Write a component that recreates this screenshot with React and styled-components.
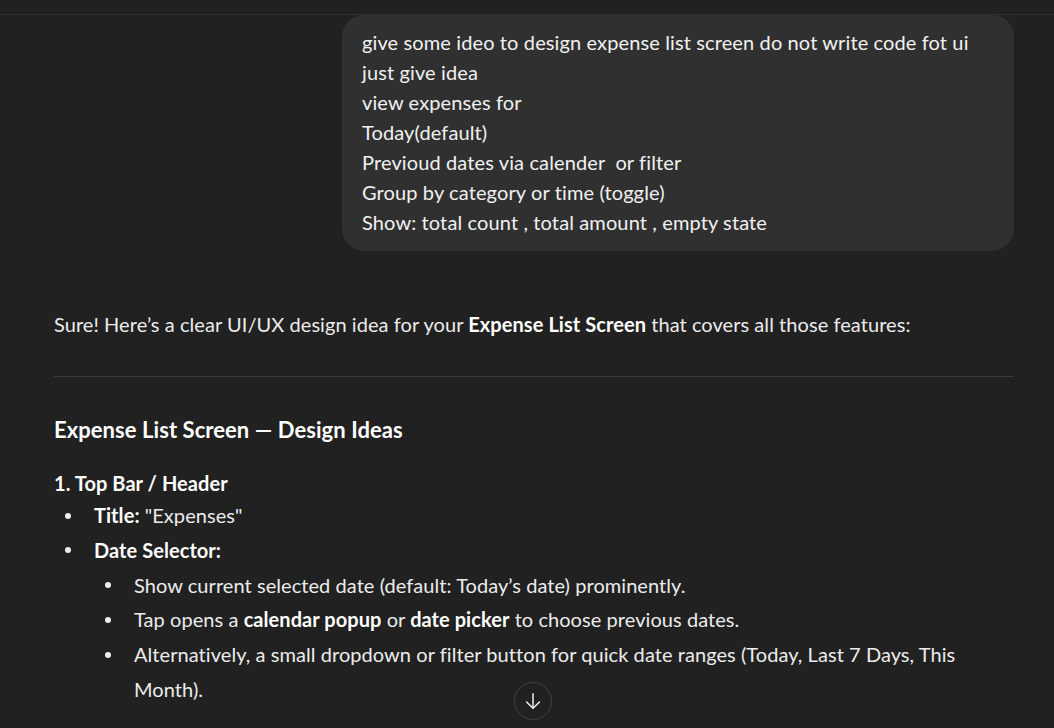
import React from "react";
import styled, { createGlobalStyle } from "styled-components";

const GlobalStyle = createGlobalStyle`
  html, body {
    margin: 0;
    padding: 0;
    height: 728px;
    overflow: hidden;
    background: #212121;
  }
  body {
    font-family: Lato, "Open Sans", "Noto Sans", sans-serif;
    color: #ececec;
    letter-spacing: 0.06px;
    -webkit-font-smoothing: antialiased;
  }
`;

const Page = styled.div`
  position: relative;
  height: 728px;
  overflow: hidden;
  background: #212121;
`;

const TopBar = styled.header`
  height: 14px;
  border-bottom: 1px solid #2f2f2f;
  background: #212121;
`;

const Thread = styled.main`
  width: 960px;
  margin-left: 54px;
  display: flex;
  flex-direction: column;
`;

const UserRow = styled.div`
  display: flex;
  justify-content: flex-end;
`;

const Bubble = styled.div`
  width: 632px;
  background: #303030;
  border-radius: 22px;
  padding: 12px 20px 14px;
  font-size: 20px;
  line-height: 30px;
  letter-spacing: 0.12px;
  color: #f1f1f1;
`;

const BubbleLine = styled.div`
  white-space: pre;
`;

const Answer = styled.article`
  margin-top: 56px;
  font-size: 20px;
  line-height: 35px;
  color: #ececec;
`;

const Para = styled.p`
  margin: 0;
`;

const Strong = styled.strong`
  font-weight: 700;
  color: #ffffff;
`;

const Rule = styled.hr`
  margin: 34px 0 0;
  border: 0;
  height: 1px;
  background: #3a3a3a;
`;

const H3 = styled.h3`
  margin: 37px 0 0;
  font-size: 22px;
  line-height: 31px;
  font-weight: 700;
  color: #ffffff;
`;

const H4 = styled.h4`
  margin: 23px 0 0;
  font-size: 20px;
  line-height: 30px;
  font-weight: 700;
  color: #ffffff;
`;

const List = styled.ul`
  margin: 0;
  padding: 0;
  list-style: none;
`;

const Item = styled.li`
  display: grid;
  grid-template-columns: 40px 1fr;
  line-height: 34.8px;
`;

const Dot = styled.span`
  width: 6px;
  height: 6px;
  border-radius: 50%;
  background: #ececec;
  margin: 14.5px 0 0 11px;
`;

const ScrollButton = styled.button`
  position: absolute;
  left: 514px;
  top: 682px;
  width: 38px;
  height: 38px;
  border-radius: 50%;
  border: 1px solid #414141;
  background: #212121;
  color: #f2f2f2;
  display: flex;
  align-items: center;
  justify-content: center;
  padding: 0;
`;

const bubbleLines = [
  "give some ideo to design expense list screen do not write code fot ui",
  "just give idea",
  "view expenses for",
  "Today(default)",
  "Previoud dates via calender  or filter",
  "Group by category or time (toggle)",
  "Show: total count , total amount , empty state",
];

export default function App() {
  return (
    <Page>
      <GlobalStyle />
      <TopBar />
      <Thread>
        <UserRow>
          <Bubble>
            {bubbleLines.map((l) => (
              <BubbleLine key={l}>{l}</BubbleLine>
            ))}
          </Bubble>
        </UserRow>
        <Answer>
          <Para>
            Sure! Here’s a clear UI/UX design idea for your <Strong>Expense List Screen</Strong> that covers all those features:
          </Para>
          <Rule />
          <H3>Expense List Screen — Design Ideas</H3>
          <H4>1. Top Bar / Header</H4>
          <List>
            <Item>
              <Dot />
              <div>
                <Strong>Title:</Strong> "Expenses"
              </div>
            </Item>
            <Item>
              <Dot />
              <div>
                <Strong>Date Selector:</Strong>
                <List>
                  <Item>
                    <Dot />
                    <div>Show current selected date (default: Today’s date) prominently.</div>
                  </Item>
                  <Item>
                    <Dot />
                    <div>
                      Tap opens a <Strong>calendar popup</Strong> or <Strong>date picker</Strong> to choose previous dates.
                    </div>
                  </Item>
                  <Item>
                    <Dot />
                    <div>
                      Alternatively, a small dropdown or filter button for quick date ranges (Today, Last 7 Days, This Month).
                    </div>
                  </Item>
                </List>
              </div>
            </Item>
          </List>
        </Answer>
      </Thread>
      <ScrollButton aria-label="Scroll down">
        <svg width="22" height="22" viewBox="0 0 24 24" fill="none" stroke="currentColor" strokeWidth="1.6" strokeLinecap="round" strokeLinejoin="round">
          <path d="M12 4v16" />
          <path d="M5 13l7 7 7-7" />
        </svg>
      </ScrollButton>
    </Page>
  );
}
